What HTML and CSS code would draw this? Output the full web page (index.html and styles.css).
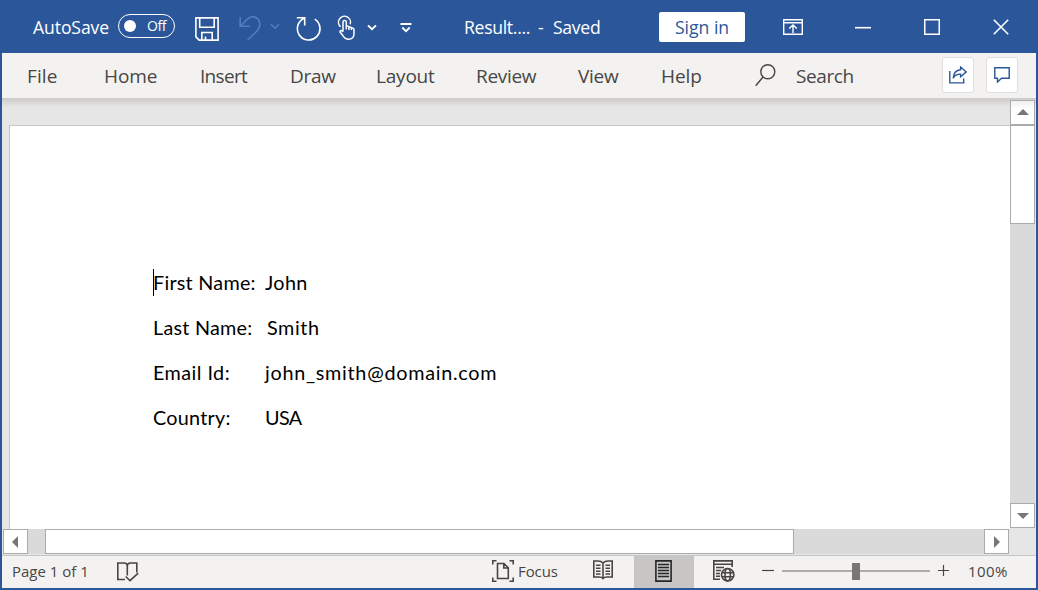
FILE: index.html
```html
<!DOCTYPE html>
<html lang="en">
<head>
<meta charset="utf-8">
<title>Result - Word</title>
<link rel="stylesheet" href="styles.css">
</head>
<body>
<div class="window">
  <header class="titlebar">
    <span class="autosave">AutoSave</span>
    <span class="toggle"><i class="knob"></i><span class="toggle-text">Off</span></span>
    <svg class="ic-save" width="24" height="24" viewBox="0 0 24 24"><path d="M.9.9H23.1V23.1H4.2L.9 19.8ZM4.7 1V10.2H19.2V1M6.8 23V15.5H17.2V23M10.5 23V19.5"/></svg>
    <svg class="ic-undo" width="23" height="25" viewBox="0 0 23 25"><path d="M1.2 1V10.3H11M1.6 9.8 8.5 3.2C14-2 21 2 20.8 9 20.7 12 19 14 17 16L8.6 24"/></svg>
    <svg class="ic-undo-more" width="10" height="7" viewBox="0 0 10 7"><path d="M1 1.3 5 5.2 9 1.3"/></svg>
    <svg class="ic-redo" width="25" height="25" viewBox="0 0 25 25"><path d="M.8 1.8H8.7V9.6M8.5 2.2A11.3 11.3 0 1 0 18.8 3.2"/></svg>
    <svg class="ic-touch" width="18" height="26" viewBox="0 0 18 26"><path d="M3.6 11.8A6 6 0 1 1 13.2 9.2M6 16.5V7.2C6 4.9 9.3 4.9 9.3 7.2V14.5M9.3 11.3C10.8 10.6 11.9 11.2 11.9 12.2V15M11.9 12.2C13.5 11.6 14.4 12.2 14.4 13.3V15M14.4 13.2C16.2 12.8 17 13.5 17 15V18.5C17 22.3 15 24.2 11.5 24.2 8.2 24.2 7 22.5 5.6 20.3L3 17C2.8 15.2 4.8 14.8 6 16.8"/></svg>
    <svg class="ic-touch-more" width="10" height="7" viewBox="0 0 10 7"><path d="M1 1.3 5 5.2 9 1.3"/></svg>
    <svg class="ic-custom" width="12" height="10" viewBox="0 0 12 10"><path d="M.5 1H11.5M2.3 4.5 6 8.2 9.7 4.5"/></svg>
    <span class="doc-name">Result....</span><span class="dash">-</span><span class="saved">Saved</span>
    <button class="signin"><span>Sign in</span></button>
    <svg class="ic-ribbon" width="20" height="16" viewBox="0 0 20 16"><path d="M.7.7H19.3V15.3H.7ZM.7 3.7H19.3M10 14V6.2M6.2 9.6 10 5.9 13.8 9.6"/></svg>
    <svg class="ic-min" width="16" height="16" viewBox="0 0 16 16"><path d="M0 8.7H16"/></svg>
    <svg class="ic-max" width="16" height="16" viewBox="0 0 16 16"><path d="M.7.7H15.3V15.3H.7Z"/></svg>
    <svg class="ic-close" width="16" height="16" viewBox="0 0 16 16"><path d="M.8.8 15.2 15.2M15.2.8.8 15.2"/></svg>
  </header>
  <nav class="tabs">
    <span class="tab t-file">File</span>
    <span class="tab t-home">Home</span>
    <span class="tab t-insert">Insert</span>
    <span class="tab t-draw">Draw</span>
    <span class="tab t-layout">Layout</span>
    <span class="tab t-review">Review</span>
    <span class="tab t-view">View</span>
    <span class="tab t-help">Help</span>
    <svg class="ic-search" width="21" height="23" viewBox="0 0 21 23"><circle cx="12.8" cy="7.8" r="7"/><path d="M8 13 .7 21.8"/></svg>
    <span class="tab t-search">Search</span>
    <button class="action"><svg width="18" height="18" viewBox="0 0 18 18"><path d="M.8 5V16.9H14.7V12.4M11.6 1 17.2 5.9 11.6 10.7V8.1C8 8 5.5 9.7 4.2 12.2 4.5 7.5 7 4.1 11.6 3.7Z"/></svg></button>
    <button class="action"><svg width="16" height="16" viewBox="0 0 16 16"><path d="M.8.8H15.2V11.2H7.5L3.5 15V11.2H.8Z"/></svg></button>
  </nav>
  <main class="workspace">
    <div class="canvas">
      <article class="page">
        <p class="line"><i class="caret"></i><span class="label l1">First Name:</span><span class="v1">John</span></p>
        <p class="line"><span class="label l2">Last Name:</span><span class="v2">Smith</span></p>
        <p class="line"><span class="label l3">Email Id:</span><span class="v3">john_smith@domain.com</span></p>
        <p class="line"><span class="label l4">Country:</span><span class="v4">USA</span></p>
      </article>
    </div>
    <div class="vscroll">
      <div class="sbtn up"><svg width="12" height="6" viewBox="0 0 12 6"><path d="M0 6 6 0 12 6Z"/></svg></div>
      <div class="vthumb"></div>
      <div class="sbtn down"><svg width="12" height="6" viewBox="0 0 12 6"><path d="M0 0 6 6 12 0Z"/></svg></div>
    </div>
  </main>
  <div class="hscroll">
    <div class="sbtn"><svg width="6" height="12" viewBox="0 0 6 12"><path d="M6 0 0 6 6 12Z"/></svg></div>
    <div class="htrack"><div class="hthumb"></div></div>
    <div class="sbtn right"><svg width="6" height="12" viewBox="0 0 6 12"><path d="M0 0 6 6 0 12Z"/></svg></div>
  </div>
  <footer class="status">
    <span class="pages">Page 1 of 1</span>
    <svg class="ic-proof" width="22" height="20" viewBox="0 0 22 20"><path d="M8 17.5H.8V1H7C9 1 10.3 2 10.3 4 10.3 2 11.5 1 13.5 1H19.8V10.5M10.3 3V13.5M8.7 14.5 13 18.7 21.2 11.2"/></svg>
    <svg class="ic-focus" width="22" height="22" viewBox="0 0 22 22"><path d="M4.5.8H.8V4.5M17.5.8H21.2V4.5M.8 17.5V21.2H4.5M21.2 17.5V21.2H17.5M5.5 3.5H12L16.3 7.8V18.5H5.5ZM11.8 3.5V8H16.3"/></svg>
    <span class="focus">Focus</span>
    <svg class="ic-read" width="20" height="20" viewBox="0 0 20 20"><path d="M10 3V19M10 3C8.5 1.3 7 1 5 1H.8V17H6C8 17 9 17.3 10 18.5 11 17.3 12 17 14 17H19.2V1H15C13 1 11.5 1.3 10 3M3 5.2H7.5M3 8.2H7.5M3 11.2H7.5M3 14H7.5M12.5 5.2H17M12.5 8.2H17M12.5 11.2H17M12.5 14H17"/></svg>
    <span class="view-on"><svg width="17" height="22" viewBox="0 0 17 22"><path d="M.9.9H16.1V21.1H.9ZM3 4.5H14M3 7.5H14M3 10.5H14M3 13.5H14M3 16.5H14"/></svg></span>
    <svg class="ic-web" width="22" height="22" viewBox="0 0 22 22"><path d="M7 19.2H.8V.9H19.2V7M.8 4.2H19M3 7.5H11M3 10.5H8M3 13.5H7M3 16.3H7"/><circle cx="14.7" cy="14.7" r="6.2"/><ellipse cx="14.7" cy="14.7" rx="2.7" ry="6.2"/><path d="M9 12.7H20.4M9 16.7H20.4"/></svg>
    <svg class="ic-minus" width="12" height="12" viewBox="0 0 12 12"><path d="M0 5.5H12"/></svg>
    <div class="slider"><i class="slider-knob"></i></div>
    <svg class="ic-plus" width="12" height="12" viewBox="0 0 12 12"><path d="M0 5.5H11M5.5 0V11"/></svg>
    <span class="zoom">100%</span>
  </footer>
</div>
</body>
</html>
```
FILE: styles.css
```css
* { box-sizing: border-box; }
body { margin: 0; font-family: "Open Sans", "Noto Sans", sans-serif; overflow: hidden; }
svg { display: block; flex: none; fill: none; stroke: currentColor; stroke-width: 1.6; }
button { border: 0; padding: 0; font: inherit; }
span { white-space: nowrap; flex: none; }

.window { width: 1038px; height: 590px; display: flex; flex-direction: column; border: solid #2b579a; border-width: 0 2px 2px; background: #e6e6e6; }

.titlebar { height: 53px; flex: none; display: flex; align-items: center; background: #2b579a; color: #fff; font-size: 17.6px; padding-left: 31px; }
.autosave { width: 77px; letter-spacing: -0.1px; }
.toggle { width: 57px; height: 24px; margin: 0 20px 2px 8px; border: 1.4px solid #fff; border-radius: 12px; display: flex; align-items: center; padding-left: 5px; }
.knob { width: 12px; height: 12px; border-radius: 50%; background: #fff; }
.toggle-text { margin-left: 11px; font-size: 14px; letter-spacing: -0.4px; }
.ic-save { margin-top: 4px; }
.ic-undo { margin: 3px 0 0 20px; color: #4f7fbc; }
.ic-undo-more { margin-left: 8px; color: #4f7fbc; }
.ic-redo { margin: 4px 0 0 16px; }
.ic-touch { margin: 3px 0 0 16px; stroke-width: 1.5; }
.ic-touch-more { margin: 2px 0 0 12px; stroke-width: 1.8; }
.ic-custom { margin: 2px 0 0 23px; stroke-width: 1.8; }
.doc-name { width: 64px; margin-left: 52px; letter-spacing: -0.3px; }
.dash { width: 6px; margin-left: 10px; }
.saved { width: 48px; margin-left: 9px; letter-spacing: -0.3px; }
.signin { width: 86px; height: 30px; margin: 1px 0 0 58px; background: #fff; color: #2b579a; border-radius: 2px; }
.ic-ribbon { margin: 1px 0 0 38px; stroke-width: 1.4; }
.ic-min { margin: 1px 0 0 52px; }
.ic-max { margin: 1px 0 0 53px; }
.ic-close { margin: 1px 0 0 53px; }

.tabs { height: 45px; flex: none; display: flex; align-items: center; background: #f3f2f1; color: #484644; font-size: 19px; padding-left: 25px; }
.tab { letter-spacing: -0.3px; margin-top: 1px; }
.t-file { width: 77px; letter-spacing: 0.1px; }
.t-home { width: 96px; letter-spacing: -0.1px; }
.t-insert { width: 90px; letter-spacing: -0.7px; }
.t-draw { width: 86px; }
.t-layout { width: 100px; letter-spacing: -0.2px; }
.t-review { width: 102px; }
.t-view { width: 83px; }
.t-help { width: 94px; letter-spacing: -0.1px; }
.t-search { width: 146px; margin-left: 20px; letter-spacing: -0.4px; }
.ic-search { stroke-width: 1.4; }
.action { width: 32px; height: 36px; margin: 0 12px 1px 0; display: flex; align-items: center; justify-content: center; background: #fff; border: 1px solid #e1dfdd; border-radius: 3px; color: #2b579a; }
.action svg { stroke-width: 1.4; margin-right: 1px; }

.workspace { height: 431px; flex: none; display: flex; background: linear-gradient(#cdcbc9, #e6e6e6 9px); }
.canvas { width: 1008px; padding: 27px 0 0 7px; }
.page { height: 404px; background: #fff; border: solid #c6c6c6; border-width: 1px 0 0 1px; padding: 134px 0 0 143px; font-family: Lato, sans-serif; font-size: 19.8px; color: #000; }
.line { position: relative; margin: 0; height: 45px; line-height: 45px; display: flex; }
.label { width: 112px; letter-spacing: 0.25px; }
.l2 { width: 114px; }
.l3 { letter-spacing: 0.45px; }
.v1 { letter-spacing: 0.35px; }
.v2 { letter-spacing: 0.6px; }
.v3 { letter-spacing: 0.73px; }
.v4 { letter-spacing: -0.6px; }
.caret { position: absolute; left: 0; top: 9px; width: 1px; height: 27px; background: #000; }
.vscroll { width: 25px; height: 428px; margin-top: 2px; background: #dadada; display: flex; flex-direction: column; }
.sbtn { width: 25px; height: 25px; flex: none; background: #fff; border: 1px solid #ababab; display: flex; align-items: center; justify-content: center; }
.sbtn svg { fill: #777; stroke: none; margin-right: 1px; }
.up { background: linear-gradient(#f0f0f0, #fff 8px); }
.up svg { margin: 0 0 1px; }
.down svg, .right svg { margin: 0; }
.vthumb { height: 99px; background: #fff; border: 1px solid #ababab; }
.down { margin-top: auto; }

.hscroll { height: 26px; flex: none; display: flex; padding-left: 1px; }
.htrack { width: 956px; height: 25px; background: #dadada; padding-left: 17px; }
.hthumb { width: 749px; height: 25px; background: #fff; border: 1px solid #ababab; }

.status { height: 33px; flex: none; display: flex; align-items: center; border-top: 1px solid #c8c6c4; background: #f3f2f1; color: #484644; font-size: 15px; padding-left: 10px; }
.status svg { stroke-width: 1.6; }
.pages { width: 105px; margin-bottom: 2px; }
.ic-proof { margin-bottom: 1px; }
.ic-focus { margin: 0 0 2px 353px; }
.focus { width: 41px; margin: 0 0 2px 4px; letter-spacing: -0.1px; }
.ic-read { margin: 0 21px 4px 34px; }
.view-on { width: 60px; height: 32px; background: #c8c6c4; color: #262626; display: flex; align-items: center; justify-content: center; }
.view-on svg { margin: 0 2px 2px 0; }
.ic-web { margin: 0 0 2px 19px; }
.status .ic-minus, .status .ic-plus { stroke-width: 1.2; margin-bottom: 2px; }
.status .ic-minus { margin-left: 27px; }
.slider { width: 148px; height: 2px; margin: 0 8px 2px; background: #aeacaa; display: flex; align-items: center; }
.slider-knob { width: 8px; height: 17px; margin-left: 70px; flex: none; background: #797775; }
.zoom { margin: 0 0 2px 18px; letter-spacing: 0.4px; }
```
